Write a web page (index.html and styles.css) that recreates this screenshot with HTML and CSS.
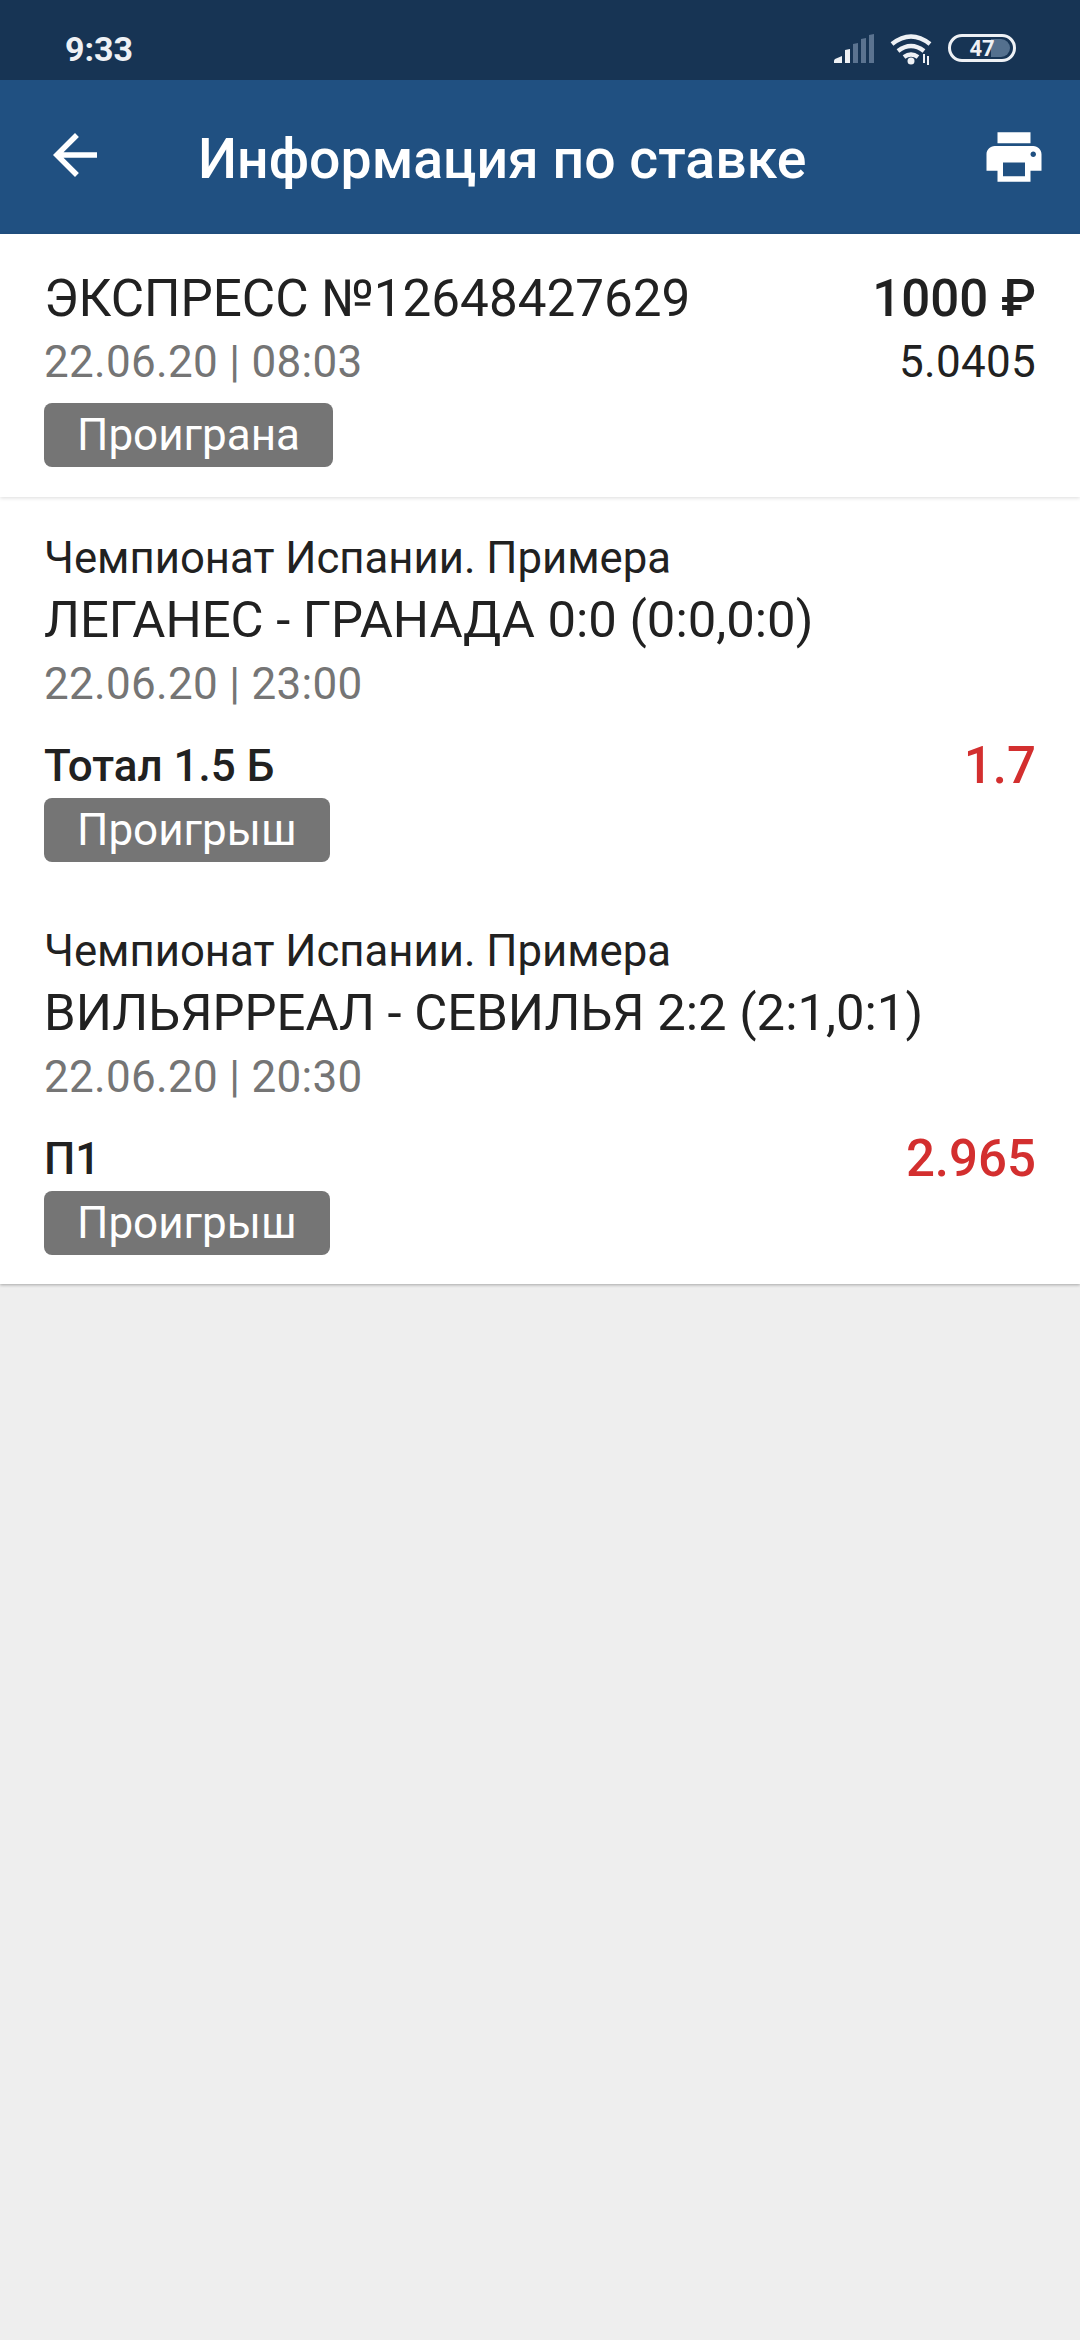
FILE: index.html
```html
<!DOCTYPE html>
<html lang="ru">
<head>
  <meta charset="UTF-8" />
  <title>Информация по ставке</title>
  <link rel="stylesheet" href="styles.css">
</head>
<body>

  <div class="status-bar">
    <span class="time">9:33</span>
    <div class="status-icons">
      <svg class="signal" width="42" height="29" viewBox="0 0 42 29">
        <path d="M0 29v-2q0-1 1-2l7-3v7z" fill="#eef1f5"/>
        <path d="M11 29V16l5-1v14z" fill="#eef1f5"/>
        <path d="M19 29V10l5-1v20z" fill="#5b7390"/>
        <path d="M27 29V5l5-1v25z" fill="#5b7390"/>
        <path d="M35 29V1l5-1v29z" fill="#5b7390"/>
      </svg>
      <svg class="wifi" width="44" height="34" viewBox="0 -2 44 34">
        <g fill="none" stroke="#eef1f5" stroke-width="4.500">
          <path d="M2 11q19-15 38 0"/>
          <path d="M8 18q13-10 26 0"/>
          <path d="M14 24q7-5 14 0"/>
        </g>
        <circle cx="21" cy="28" r="3.500" fill="#eef1f5"/>
        <path d="M33 21h2v9h-2zM37 23h2v9h-2z" fill="#eef1f5"/>
      </svg>
      <div class="battery">
        <div class="battery-fill"></div>
        <span class="battery-num">47</span>
      </div>
    </div>
  </div>

  <header class="app-bar">
    <svg class="back" width="66" height="66" viewBox="0 0 24 24">
      <path d="M20 11H7.830l5.590-5.590L12 4l-8 8 8 8 1.410-1.410L7.830 13H20v-2z" fill="#fff"/>
    </svg>
    <h1>Информация по ставке</h1>
    <svg class="print" width="66" height="66" viewBox="0 0 24 24">
      <path d="M19 8H5c-1.660 0-3 1.340-3 3v6h4v4h12v-4h4v-6c0-1.660-1.340-3-3-3zm-3 11H8v-5h8v5zm3-7c-.55 0-1-.45-1-1s.45-1 1-1 1 .45 1 1-.45 1-1 1zm-1-9H6v4h12V3z" fill="#fff"/>
    </svg>
  </header>

  <section class="summary">
    <div class="row title-row">
      <span class="title">ЭКСПРЕСС №12648427629</span>
      <span class="amount">1000 ₽</span>
    </div>
    <div class="row">
      <span class="date">22.06.20 | 08:03</span>
      <span class="coef">5.0405</span>
    </div>
    <span class="tag">Проиграна</span>
  </section>

  <section class="events">
    <div class="event">
      <div class="league">Чемпионат Испании. Примера</div>
      <div class="match">ЛЕГАНЕС - ГРАНАДА 0:0 (0:0,0:0)</div>
      <div class="date">22.06.20 | 23:00</div>
      <div class="row pick">
        <span class="outcome">Тотал 1.5 Б</span>
        <span class="odds">1.7</span>
      </div>
      <span class="tag">Проигрыш</span>
    </div>
    <div class="event">
      <div class="league">Чемпионат Испании. Примера</div>
      <div class="match">ВИЛЬЯРРЕАЛ - СЕВИЛЬЯ 2:2 (2:1,0:1)</div>
      <div class="date">22.06.20 | 20:30</div>
      <div class="row pick">
        <span class="outcome">П1</span>
        <span class="odds">2.965</span>
      </div>
      <span class="tag">Проигрыш</span>
    </div>
  </section>

</body>
</html>
```

FILE: styles.css
```css
html, body {
  margin: 0;
}
body {
  height: 2340px;
  background-color: #eeeeee;
  color: #212121;
  font-family: Roboto, "Noto Sans", sans-serif;
}
.status-bar {
  height: 80px;
  background-color: #173454;
  display: flex;
  justify-content: space-between;
  align-items: center;
  padding: 18px 64px 0 65px;
  box-sizing: border-box;
  color: #eef1f5;
}
.time {
  font-size: 34px;
  font-weight: 700;
}
.status-icons {
  display: flex;
  align-items: center;
  gap: 14px;
  margin-top: -2px;
}
.battery {
  position: relative;
  box-sizing: border-box;
  width: 68px;
  height: 28px;
  border: 3px solid #eef1f5;
  border-radius: 14px;
  display: flex;
  align-items: center;
  justify-content: center;
  overflow: hidden;
}
.battery-fill {
  position: absolute;
  right: 3px;
  top: 2px;
  bottom: 2px;
  width: 19px;
  background-color: #54708e;
  border-radius: 0 9px 9px 0;
}
.battery-num {
  position: relative;
  font-size: 22px;
  font-weight: 700;
  color: #eef1f5;
}
.app-bar {
  height: 154px;
  background-color: #205081;
  display: flex;
  align-items: center;
  padding: 0 33px 0 42px;
  box-sizing: border-box;
  color: white;
}
.back {
  margin-top: -4px;
}
.app-bar h1 {
  flex: 1;
  margin: 4px 0 0 90px;
  font-size: 55.400px;
  font-weight: 500;
}
.summary {
  height: 263px;
  box-sizing: border-box;
  background: white;
  padding: 33px 44px 0;
  box-shadow: 0 1px 4px rgba(0,0,0,0.14);
  position: relative;
}
.row {
  display: flex;
  justify-content: space-between;
  align-items: center;
}
.title-row {
  height: 63px;
}
.title {
  font-size: 51.200px;
  line-height: 64px;
}
.amount {
  font-size: 51px;
  line-height: 64px;
  font-weight: 500;
}
.date {
  font-size: 44px;
  line-height: 64px;
  letter-spacing: 0.3px;
  color: #757575;
}
.coef {
  font-size: 44px;
  line-height: 64px;
  letter-spacing: 0.3px;
}
.tag {
  display: inline-block;
  margin-top: 9px;
  padding: 0 33px;
  height: 64px;
  line-height: 64px;
  background-color: #757575;
  border-radius: 8px;
  color: white;
  font-size: 44px;
}
.events {
  padding: 31px 44px 29px;
  background: white;
  box-shadow: 0 1px 3px rgba(0,0,0,0.3);
}
.event + .event {
  margin-top: 59px;
}
.league {
  font-size: 43.700px;
  line-height: 60px;
}
.match {
  font-size: 50.800px;
  line-height: 64px;
}
.pick {
  margin-top: 18px;
}
.outcome {
  font-size: 44px;
  line-height: 64px;
  font-weight: 500;
}
.odds {
  font-size: 51px;
  line-height: 64px;
  font-weight: 500;
  color: #d32f2f;
}
.pick + .tag {
  margin-top: 0;
}
```
